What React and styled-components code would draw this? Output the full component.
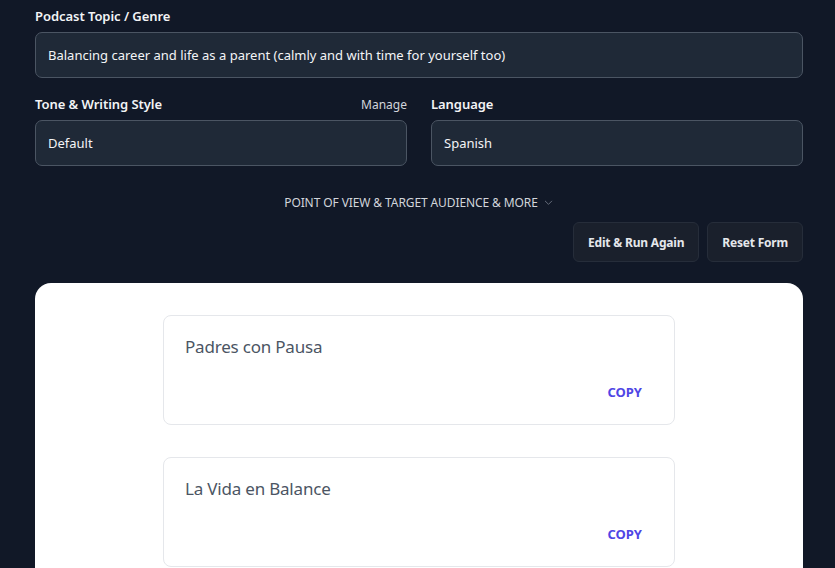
import styled, {createGlobalStyle} from "styled-components";

const GlobalStyle = createGlobalStyle`
  html, body {
    margin: 0;
    padding: 0;
    background: #111827;
  }
  body {
    font-family: "Noto Sans", "Open Sans", sans-serif;
    overflow: hidden;
  }
`;

const titles = ["Padres con Pausa", "La Vida en Balance"];

const App = () => {
    return (
        <Page>
            <GlobalStyle/>
            <Field>
                <LabelRow>
                    <Label>Podcast Topic / Genre</Label>
                </LabelRow>
                <Input>Balancing career and life as a parent (calmly and with time for yourself too)</Input>
            </Field>

            <TwoCols>
                <Field>
                    <LabelRow>
                        <Label>Tone &amp; Writing Style</Label>
                        <Manage>Manage</Manage>
                    </LabelRow>
                    <Input>Default</Input>
                </Field>
                <Field>
                    <LabelRow>
                        <Label>Language</Label>
                    </LabelRow>
                    <Input>Spanish</Input>
                </Field>
            </TwoCols>

            <MoreToggle>
                POINT OF VIEW &amp; TARGET AUDIENCE &amp; MORE
                <svg width="11" height="11" viewBox="0 0 24 24" fill="none" stroke="#6b7280" strokeWidth="2"
                     strokeLinecap="round" strokeLinejoin="round">
                    <path d="M5 9l7 7 7-7"/>
                </svg>
            </MoreToggle>

            <Actions>
                <ActionButton>Edit &amp; Run Again</ActionButton>
                <ActionButton>Reset Form</ActionButton>
            </Actions>

            <Results>
                {titles.map((t) => (
                    <ResultCard key={t}>
                        <ResultTitle>{t}</ResultTitle>
                        <CopyRow>
                            <CopyButton>COPY</CopyButton>
                        </CopyRow>
                    </ResultCard>
                ))}
            </Results>
        </Page>
    );
}

const Page = styled.div`
  padding: 6px 32px 0 35px;
  display: flex;
  flex-direction: column;
  color: #f3f4f6;
`;

const Field = styled.div`
  display: flex;
  flex-direction: column;
  gap: 6px;
  min-width: 0;
`;

const LabelRow = styled.div`
  display: flex;
  justify-content: space-between;
  align-items: center;
  height: 20px;
`;

const Label = styled.span`
  font-size: 13px;
  font-weight: 600;
  color: #f3f4f6;
  letter-spacing: -0.05px;
`;

const Manage = styled.span`
  font-size: 12px;
  color: #d1d5db;
`;

const Input = styled.div`
  height: 46px;
  box-sizing: border-box;
  background: #1f2937;
  border: 1px solid #4b5563;
  border-radius: 7px;
  padding: 0 12px;
  display: flex;
  align-items: center;
  font-size: 13px;
  color: #f3f4f6;
  white-space: nowrap;
`;

const TwoCols = styled.div`
  display: grid;
  grid-template-columns: 1fr 1fr;
  gap: 24px;
  margin-top: 16px;
`;

const MoreToggle = styled.div`
  display: flex;
  justify-content: center;
  align-items: center;
  gap: 5px;
  margin-top: 28px;
  font-size: 12px;
  color: #d1d5db;
  letter-spacing: -0.1px;
`;

const Actions = styled.div`
  display: flex;
  justify-content: flex-end;
  gap: 8px;
  margin-top: 11px;
`;

const ActionButton = styled.button`
  height: 40px;
  padding: 0 14px;
  background: #1a202c;
  border: 1px solid #262d3a;
  border-radius: 6px;
  color: #e5e7eb;
  font-family: inherit;
  font-size: 12px;
  font-weight: 700;
  letter-spacing: -0.2px;
`;

const Results = styled.div`
  margin-top: 21px;
  background: #ffffff;
  border-radius: 16px 16px 0 0;
  padding: 32px 0 40px;
  display: flex;
  flex-direction: column;
  align-items: center;
  gap: 32px;
`;

const ResultCard = styled.div`
  width: 512px;
  height: 110px;
  box-sizing: border-box;
  border: 1px solid #e5e7eb;
  border-radius: 8px;
  padding: 19px 32px 23px 21px;
  display: flex;
  flex-direction: column;
  justify-content: space-between;
`;

const ResultTitle = styled.div`
  font-size: 17px;
  color: #4b5563;
  letter-spacing: -0.2px;
`;

const CopyRow = styled.div`
  display: flex;
  justify-content: flex-end;
`;

const CopyButton = styled.span`
  font-size: 13px;
  font-weight: 700;
  color: #4f46e5;
`;

export default App;
